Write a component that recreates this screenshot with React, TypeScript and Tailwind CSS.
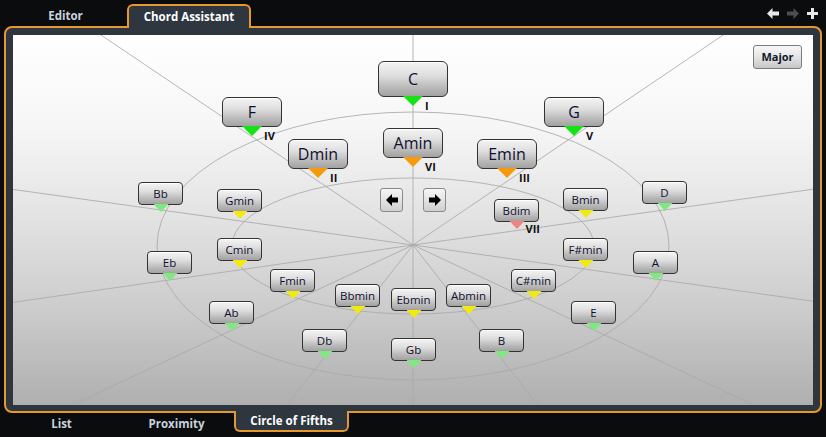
import React from 'react';

type Chord = {
  name: string;
  x: number; // box left (page coords)
  y: number; // box top
  big?: boolean;
  color: string;
  roman?: string;
};

// canvas origin in page coords is (13, 35)
const OX = 13;
const OY = 35;

const chords: Chord[] = [
  { name: 'C', x: 378, y: 61, big: true, color: '#16e316', roman: 'I' },
  { name: 'F', x: 222, y: 97, big: true, color: '#16e316', roman: 'IV' },
  { name: 'G', x: 544, y: 97, big: true, color: '#16e316', roman: 'V' },
  { name: 'Dmin', x: 288, y: 139, big: true, color: '#f59a0c', roman: 'II' },
  { name: 'Amin', x: 383, y: 128, big: true, color: '#f59a0c', roman: 'VI' },
  { name: 'Emin', x: 477, y: 139, big: true, color: '#f59a0c', roman: 'III' },
  { name: 'Bb', x: 138, y: 182, color: '#7fe87f' },
  { name: 'Gmin', x: 217, y: 189, color: '#f2ea0a' },
  { name: 'Eb', x: 147, y: 251, color: '#7fe87f' },
  { name: 'Cmin', x: 217, y: 238, color: '#f2ea0a' },
  { name: 'Bdim', x: 494, y: 199, color: '#f08282', roman: 'VII' },
  { name: 'Bmin', x: 563, y: 188, color: '#f2ea0a' },
  { name: 'D', x: 642, y: 181, color: '#7fe87f' },
  { name: 'F#min', x: 563, y: 238, color: '#f2ea0a' },
  { name: 'A', x: 633, y: 251, color: '#7fe87f' },
  { name: 'C#min', x: 511, y: 269, color: '#f2ea0a' },
  { name: 'Fmin', x: 270, y: 269, color: '#f2ea0a' },
  { name: 'Bbmin', x: 335, y: 284, color: '#f2ea0a' },
  { name: 'Ebmin', x: 391, y: 288, color: '#f2ea0a' },
  { name: 'Abmin', x: 446, y: 284, color: '#f2ea0a' },
  { name: 'Db', x: 302, y: 329, color: '#7fe87f' },
  { name: 'Gb', x: 391, y: 338, color: '#7fe87f' },
  { name: 'B', x: 479, y: 329, color: '#7fe87f' },
  { name: 'Ab', x: 209, y: 301, color: '#7fe87f' },
  { name: 'E', x: 571, y: 301, color: '#7fe87f' },
];

// marker tips of the major keys, the radial lines go through them
const rayTips: [number, number][] = [
  [400, 72], [561, 101], [651, 175], [642, 244], [581, 295], [488, 323],
  [400, 331], [311, 323], [219, 295], [156, 245], [148, 175], [238, 101],
];

const CX = 400;
const CY = 210;

function ChordBox({ chord }: { chord: Chord }) {
  const w = chord.big ? (chord.name === 'C' ? 70 : 60) : 45;
  const h = chord.big ? (chord.name === 'C' ? 36 : 30) : 23;
  const tw = chord.big ? 20 : 15;
  const th = chord.big ? 10 : 8;
  return (
    <div
      className="absolute"
      style={{ left: chord.x - OX, top: chord.y - OY, width: w }}
    >
      <div
        className={`flex items-center justify-center border border-[#333] bg-[linear-gradient(to_bottom,#f4f4f4_0%,#dedede_40%,#b9b9b9_75%,#a2a2a2_100%)] text-[#101030] shadow-[inset_0_1px_0_#ffffff] ${
          chord.big ? 'rounded-[6px] text-[16px]' : 'rounded-[4px] text-[11.5px]'
        }`}
        style={{ height: h }}
      >
        {chord.name}
      </div>
      <svg
        width={tw}
        height={th}
        className="absolute left-1/2 -translate-x-1/2"
        style={{ top: h - 1 }}
      >
        <polygon points={`0,0 ${tw},0 ${tw / 2},${th}`} fill={chord.color} />
      </svg>
      {chord.roman && (
        <div
          className="absolute text-[11px] font-bold leading-none text-[#111]"
          style={{ left: w / 2 + (chord.roman === 'VII' ? 9 : 12), top: h + th - 7 }}
        >
          {chord.roman}
        </div>
      )}
    </div>
  );
}

function ArrowButton({ dir }: { dir: 'left' | 'right' }) {
  return (
    <div className="absolute flex h-[24px] w-[23px] items-center justify-center rounded-[3px] border border-[#8a8a8a] bg-[linear-gradient(to_bottom,#f6f6f6,#d0d0d0)]"
      style={{ left: (dir === 'left' ? 380 : 423) - OX, top: 188 - OY }}
    >
      <svg width="12" height="12" viewBox="0 0 12 12">
        {dir === 'left' ? (
          <polygon points="0,6 6,0 6,3.5 12,3.5 12,8.5 6,8.5 6,12" fill="#000" />
        ) : (
          <polygon points="12,6 6,0 6,3.5 0,3.5 0,8.5 6,8.5 6,12" fill="#000" />
        )}
      </svg>
    </div>
  );
}

export default function App() {
  return (
    <div
      className="flex h-[437px] w-[826px] flex-col overflow-hidden bg-[#0b0c0e] text-[11.5px] font-bold"
      style={{ fontFamily: '"Open Sans", "DejaVu Sans", sans-serif' }}
    >
      {/* top tabs */}
      <div className="relative flex h-[26px] items-end pl-[4px]">
        <div className="flex h-[22px] w-[123px] items-start justify-center pt-[3px] text-[#c9d3de]">Editor</div>
        <div className="relative z-10 -mb-[2px] flex h-[24px] w-[124px] items-start justify-center rounded-t-[6px] border-2 border-b-0 border-[#e8972c] bg-[#2e3640] pt-[2px] text-white">
          Chord Assistant
        </div>
        <div className="absolute right-[8px] top-[8px] flex items-center gap-[8px]">
          <svg width="12" height="11" viewBox="0 0 12 11">
            <polygon points="0,5.5 5.5,0 5.5,3.5 12,3.5 12,7.5 5.5,7.5 5.5,11" fill="#e8e8e8" />
          </svg>
          <svg width="12" height="11" viewBox="0 0 12 11">
            <polygon points="12,5.5 6.5,0 6.5,3.5 0,3.5 0,7.5 6.5,7.5 6.5,11" fill="#4a4d52" />
          </svg>
          <svg width="11" height="11" viewBox="0 0 11 11">
            <path d="M4 0h3v4h4v3H7v4H4V7H0V4h4z" fill="#e8e8e8" />
          </svg>
        </div>
      </div>

      {/* frame */}
      <div className="ml-[4px] h-[387px] w-[818px] rounded-[8px] border-2 border-[#e8972c] bg-[#2e3640] p-[7px] pb-[6px]">
        <div
          className="relative h-[370px] w-[800px] overflow-hidden bg-[linear-gradient(to_bottom,#ffffff_0%,#f6f6f6_25%,#e2e2e2_50%,#cbcbcb_75%,#afafaf_100%)] font-normal"
          style={{ fontFamily: '"Open Sans", "DejaVu Sans", sans-serif' }}
        >
          <svg className="absolute inset-0" width="800" height="370">
            {rayTips.map(([x, y], i) => (
              <line
                key={i}
                x1={CX}
                y1={CY}
                x2={CX + (x - CX) * 4}
                y2={CY + (y - CY) * 4}
                stroke="#a9a9a9"
                strokeWidth="1"
                strokeOpacity="0.85"
              />
            ))}
            <ellipse cx={CX} cy={211} rx={256} ry={134} fill="none" stroke="#a9a9a9" strokeOpacity="0.85" />
            <ellipse cx={CX} cy={211} rx={181} ry={68} fill="none" stroke="#a9a9a9" strokeOpacity="0.85" />
          </svg>

          {chords.map((c) => (
            <ChordBox key={c.name} chord={c} />
          ))}

          <ArrowButton dir="left" />
          <ArrowButton dir="right" />

          <div className="absolute left-[740px] top-[10px] flex h-[24px] w-[49px] items-center justify-center rounded-[3px] border border-[#7c7c7c] bg-[linear-gradient(to_bottom,#f8f8f8,#e4e4e4_50%,#c6c6c6)] text-[11px] font-bold text-[#101830]">
            Major
          </div>
        </div>
      </div>

      {/* bottom tabs */}
      <div className="flex h-[24px] items-start pl-[4px]">
        <div className="flex h-[21px] w-[115px] items-center justify-center text-[#c9d3de]">List</div>
        <div className="flex h-[21px] w-[115px] items-center justify-center text-[#c9d3de]">Proximity</div>
        <div className="relative z-10 -mt-[2px] flex h-[21px] w-[115px] items-center justify-center rounded-b-[6px] border-2 border-t-0 border-[#e8972c] bg-[#2e3640] pt-[1px] text-white">
          Circle of Fifths
        </div>
      </div>
    </div>
  );
}
